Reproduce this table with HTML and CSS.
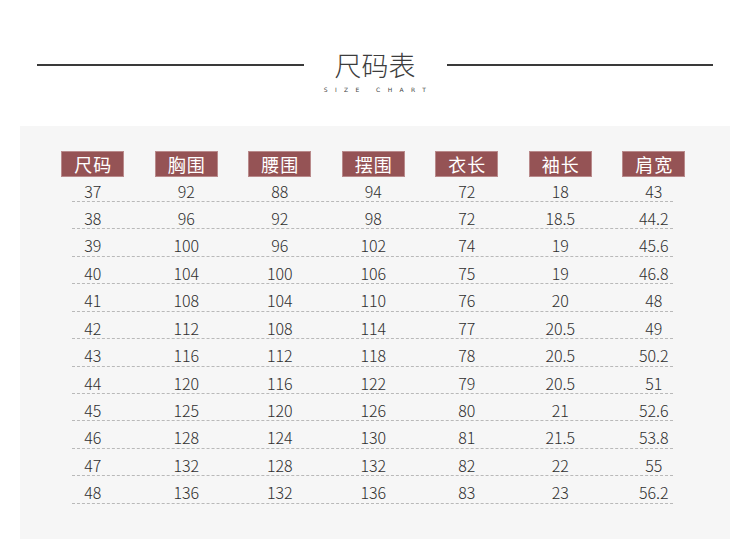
FILE: index.html
```html
<!DOCTYPE html>
<html lang="zh">
<head>
<meta charset="utf-8">
<link rel="stylesheet" href="styles.css">
</head>
<body>
<header class="head">
  <span class="rule"></span>
  <div class="title">
    <h1>尺码表</h1>
    <p>SIZE CHART</p>
  </div>
  <span class="rule"></span>
</header>
<section class="panel">
  <div class="table">
    <div class="thead">
      <span class="badge">尺码</span>
      <span class="badge">胸围</span>
      <span class="badge">腰围</span>
      <span class="badge">摆围</span>
      <span class="badge">衣长</span>
      <span class="badge">袖长</span>
      <span class="badge">肩宽</span>
    </div>
    <div class="rows">
      <div class="row"><div class="cells"><span>37</span><span>92</span><span>88</span><span>94</span><span>72</span><span>18</span><span>43</span></div></div>
      <div class="row"><div class="cells"><span>38</span><span>96</span><span>92</span><span>98</span><span>72</span><span>18.5</span><span>44.2</span></div></div>
      <div class="row"><div class="cells"><span>39</span><span>100</span><span>96</span><span>102</span><span>74</span><span>19</span><span>45.6</span></div></div>
      <div class="row"><div class="cells"><span>40</span><span>104</span><span>100</span><span>106</span><span>75</span><span>19</span><span>46.8</span></div></div>
      <div class="row"><div class="cells"><span>41</span><span>108</span><span>104</span><span>110</span><span>76</span><span>20</span><span>48</span></div></div>
      <div class="row"><div class="cells"><span>42</span><span>112</span><span>108</span><span>114</span><span>77</span><span>20.5</span><span>49</span></div></div>
      <div class="row"><div class="cells"><span>43</span><span>116</span><span>112</span><span>118</span><span>78</span><span>20.5</span><span>50.2</span></div></div>
      <div class="row"><div class="cells"><span>44</span><span>120</span><span>116</span><span>122</span><span>79</span><span>20.5</span><span>51</span></div></div>
      <div class="row"><div class="cells"><span>45</span><span>125</span><span>120</span><span>126</span><span>80</span><span>21</span><span>52.6</span></div></div>
      <div class="row"><div class="cells"><span>46</span><span>128</span><span>124</span><span>130</span><span>81</span><span>21.5</span><span>53.8</span></div></div>
      <div class="row"><div class="cells"><span>47</span><span>132</span><span>128</span><span>132</span><span>82</span><span>22</span><span>55</span></div></div>
      <div class="row"><div class="cells"><span>48</span><span>136</span><span>132</span><span>136</span><span>83</span><span>23</span><span>56.2</span></div></div>
    </div>
  </div>
</section>
</body>
</html>
```

FILE: styles.css
```css
html, body {
  margin: 0;
  padding: 0;
  background: #ffffff;
  font-family: "Noto Sans CJK SC", "Noto Sans", sans-serif;
  color: #333;
}

.head {
  display: flex;
  align-items: flex-start;
  padding: 50px 37px 0;
  height: 44px;
}

.rule {
  flex: 1;
  height: 1.5px;
  margin-top: 14px;
  background: #3a3a3a;
}

.title {
  width: 143px;
  text-align: center;
}

.title h1 {
  margin: 0;
  font-size: 27px;
  line-height: 30px;
  font-weight: 300;
  color: #3c3c3c;
  letter-spacing: 0;
}

.title p {
  margin: 6px -20px 0;
  font-family: "DejaVu Sans", sans-serif;
  font-size: 6px;
  line-height: 8px;
  letter-spacing: 7.4px;
  padding-left: 7px;
  color: #444;
  white-space: nowrap;
}

.panel {
  margin: 32px 20px 0;
  height: 388px;
  padding-top: 25px;
  background: #f6f6f6;
}

.table {
  margin-left: 26px;
  width: 654px;
}

.thead {
  display: grid;
  grid-template-columns: repeat(7, 93.5px);
  justify-items: center;
  margin-bottom: -2.5px;
}

.badge {
  width: 60px;
  height: 24px;
  line-height: 24px;
  text-align: center;
  background: #955355;
  border: 1px solid #b98a8b;
  color: #ffffff;
  font-size: 18px;
  letter-spacing: 1px;
  padding-left: 1px;
}

.rows {
  margin: 0 27px 0 26px;
}

.row {
  height: 26.45px;
  border-bottom: 1px dashed #b9b9b9;
}

.cells {
  display: grid;
  grid-template-columns: repeat(7, 93.5px);
  margin: 0 -27px 0 -26px;
  padding-top: 6px;
}

.cells span {
  text-align: center;
  font-size: 16px;
  line-height: 20px;
  font-weight: 300;
  color: #2e2e2e;
}
```
